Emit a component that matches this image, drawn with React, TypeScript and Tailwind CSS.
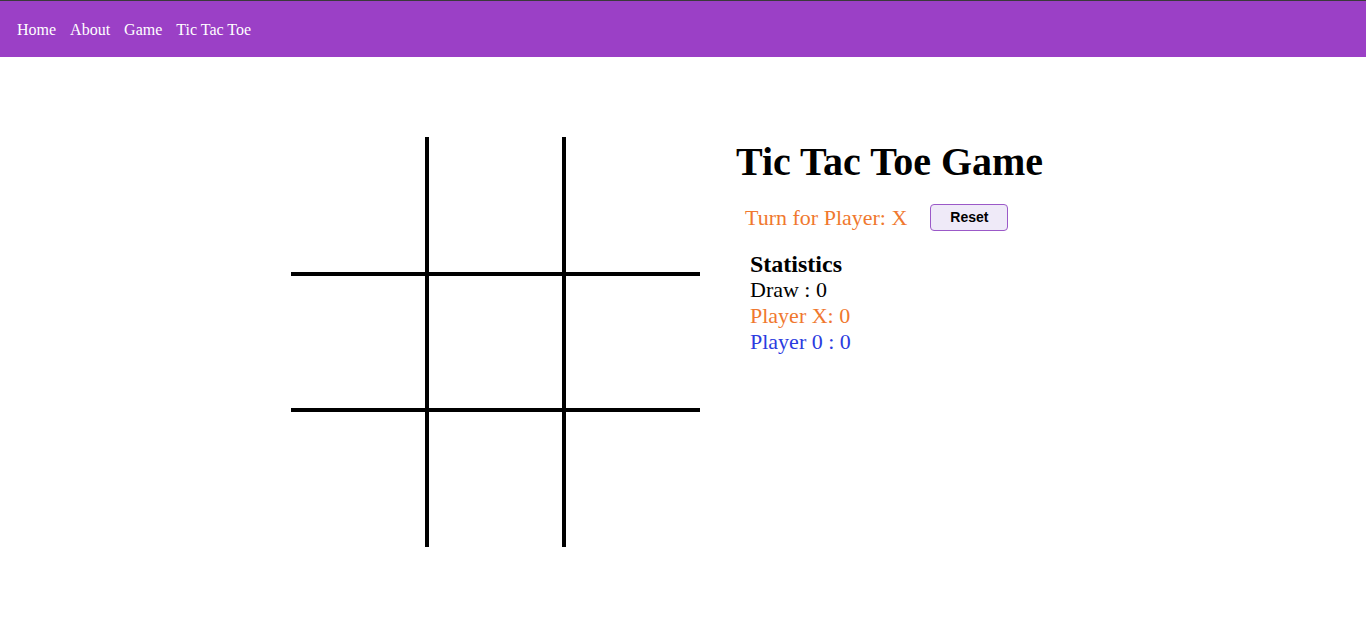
import React, { useState } from 'react';

type Cell = 'X' | '0' | null;

// Navbar
const NavBar: React.FC = () => {
  const links = ['Home', 'About', 'Game', 'Tic Tac Toe'];
  return (
    <nav className="h-[57px] pt-[2px] bg-[#9b40c6] border-t border-[#3a3a3a] flex items-center pl-[17px] gap-[14px] text-white text-[16px] font-['Liberation_Serif',serif]">
      {links.map((link) => (
        <a key={link} href="#" className="leading-none">
          {link}
        </a>
      ))}
    </nav>
  );
};

// Board - 3x3 cells, lines drawn with borders
const Board: React.FC<{ cells: Cell[]; onPlay: (i: number) => void }> = ({ cells, onPlay }) => {
  const borderClass = (i: number) => {
    const r = Math.floor(i / 3);
    const c = i % 3;
    const right = c < 2 ? 'border-r-4' : '';
    const bottom = r < 2 ? 'border-b-4' : '';
    return `${right} ${bottom}`;
  };

  return (
    <div className="grid grid-cols-[138px_137px_134px] grid-rows-[139px_136px_135px] shrink-0">
      {cells.map((cell, i) => (
        <button
          key={i}
          onClick={() => onPlay(i)}
          className={`border-black flex items-center justify-center text-[64px] font-['Liberation_Serif',serif] ${borderClass(i)}`}
        >
          {cell}
        </button>
      ))}
    </div>
  );
};

export default function App() {
  const [cells, setCells] = useState<Cell[]>(Array(9).fill(null));
  const [turn, setTurn] = useState<'X' | '0'>('X');

  const handlePlay = (i: number) => {
    if (cells[i]) return;
    const next = [...cells];
    next[i] = turn;
    setCells(next);
    setTurn(turn === 'X' ? '0' : 'X');
  };

  const reset = () => {
    setCells(Array(9).fill(null));
    setTurn('X');
  };

  return (
    <div className="min-h-screen bg-white font-['Liberation_Serif',serif]">
      <NavBar />
      <main className="flex items-start pt-[80px] pl-[291px] gap-[36px]">
        <Board cells={cells} onPlay={handlePlay} />
        <div className="flex flex-col">
          <h1 className="text-[40px] leading-[50px] font-bold text-black">Tic Tac Toe Game</h1>
          <div className="flex items-center mt-[14px] pl-[9px] gap-[23px]">
            <span className="text-[22px] leading-[33px] text-[#f0782e]">Turn for Player: {turn}</span>
            <button
              onClick={reset}
              className="w-[78px] h-[27px] bg-[#efeaf8] border border-[#9b59c8] rounded-[4px] text-[14px] font-bold text-black font-['Liberation_Sans',sans-serif]"
            >
              Reset
            </button>
          </div>
          <div className="mt-[17px] pl-[14px] flex flex-col leading-[26px]">
            <span className="text-[24px] font-bold text-black">Statistics</span>
            <span className="text-[22px] text-black">Draw : 0</span>
            <span className="text-[22px] text-[#f0782e]">Player X: 0</span>
            <span className="text-[22px] text-[#2b3be0]">Player 0 : 0</span>
          </div>
        </div>
      </main>
    </div>
  );
}
